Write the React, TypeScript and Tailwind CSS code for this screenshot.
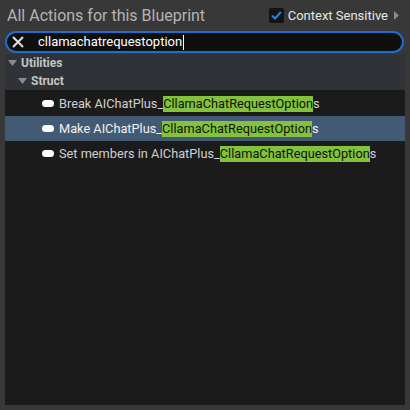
import React from "react";

const font = { fontFamily: "Roboto, 'Open Sans', sans-serif" };

function Item({ prefix, hl, suffix, selected }: { prefix: string; hl: string; suffix: string; selected?: boolean }) {
  return (
    <div className={`flex h-[25px] items-center ${selected ? "bg-[#435a74] text-[#f0f0f0]" : "text-[#d0d0d0]"}`}>
      <div className="ml-[37px] h-[7px] w-[12px] rounded-full bg-white" />
      <div className="ml-[5px] flex items-center whitespace-nowrap text-[12.75px] leading-[16px]">
        <span>{prefix}</span>
        <span className="bg-[#82c23c] text-[#111]">{hl}</span>
        <span>{suffix}</span>
      </div>
    </div>
  );
}

export default function App() {
  return (
    <div className="flex h-[410px] w-[410px] flex-col bg-[#383838]" style={font}>
      <div className="flex h-[31px] items-center pl-[7px] pr-[11px]">
        <div className="whitespace-nowrap text-[16px] text-[#b4b4b4]">All Actions for this Blueprint</div>
        <div className="ml-auto flex items-center">
          <div className="flex h-[15px] w-[15px] items-center justify-center rounded-[2px] bg-[#141414]">
            <svg width="11" height="9" viewBox="0 0 11 9">
              <path d="M1 4.5 L4 7.5 L10 1" stroke="#1f86e6" strokeWidth="2" fill="none" />
            </svg>
          </div>
          <div className="ml-[4px] whitespace-nowrap text-[13px] text-[#e6e6e6]">Context Sensitive</div>
          <svg className="ml-[6px]" width="5" height="9" viewBox="0 0 5 9">
            <path d="M0 0 L5 4.5 L0 9 Z" fill="#8a8a8a" />
          </svg>
        </div>
      </div>
      <div className="ml-[5px] flex h-[22px] w-[399px] items-center rounded-full border-2 border-[#1e6ecb] bg-[#0f0f0f]">
        <svg className="ml-[5px]" width="12" height="12" viewBox="0 0 12 12">
          <path d="M1 1 L11 11 M11 1 L1 11" stroke="#e0e0e0" strokeWidth="2" />
        </svg>
        <div className="ml-[14px] flex items-center whitespace-nowrap text-[13px] text-white">
          cllamachatrequestoption
          <span className="ml-[1px] inline-block h-[15px] w-[1px] bg-white" />
        </div>
      </div>
      <div className="mx-[5px] mt-[1px] mb-[5px] flex flex-1 flex-col bg-[#1b1b1b]">
        <div className="bg-[#2f3237]">
          <div className="flex h-[18px] items-center">
            <svg className="ml-[3px]" width="9" height="6" viewBox="0 0 9 6">
              <path d="M0 0 L9 0 L4.5 6 Z" fill="#8a8a8a" />
            </svg>
            <span className="ml-[4px] text-[12px] font-bold text-[#c4c4c4]">Utilities</span>
          </div>
          <div className="flex h-[18px] items-center">
            <svg className="ml-[13px]" width="9" height="6" viewBox="0 0 9 6">
              <path d="M0 0 L9 0 L4.5 6 Z" fill="#8a8a8a" />
            </svg>
            <span className="ml-[4px] text-[12px] font-bold text-[#c4c4c4]">Struct</span>
          </div>
        </div>
        <div className="pt-[1px]">
          <Item prefix="Break AIChatPlus_" hl="CllamaChatRequestOption" suffix="s" />
          <Item prefix="Make AIChatPlus_" hl="CllamaChatRequestOption" suffix="s" selected />
          <Item prefix="Set members in AIChatPlus_" hl="CllamaChatRequestOption" suffix="s" />
        </div>
      </div>
    </div>
  );
}
